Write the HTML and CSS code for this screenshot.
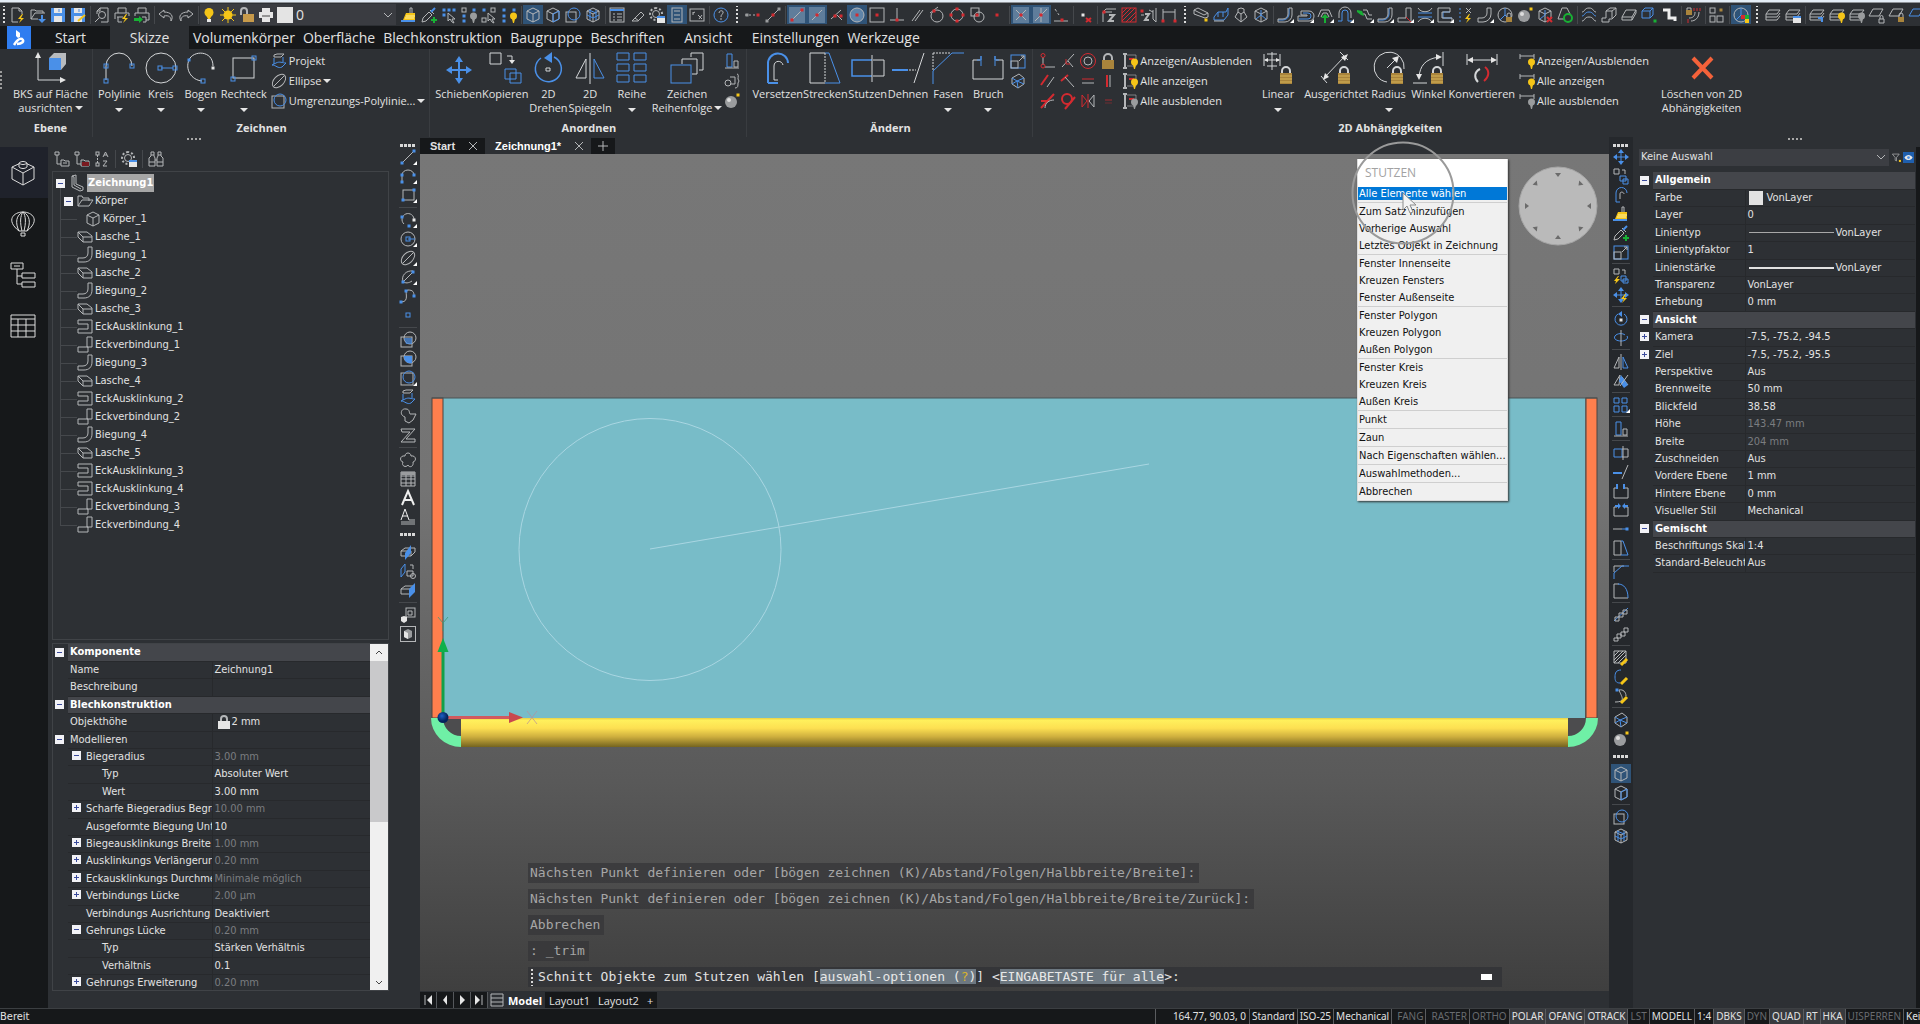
FILE: index.html
```html
<!DOCTYPE html>
<html lang="de">
<head>
    <meta charset="UTF-8">
    <meta name="viewport" content="width=device-width, initial-scale=1.0">
    <title>Zeichnung1</title>
    <link rel="stylesheet" href="styles.css">
</head>
<body>
    <div class="window-edge"></div>

    <!-- Quick access toolbar -->
    <header class="quickbar">
        <div class="tools" data-icons=": new open save saveas | preview print printgo | undo redo |"></div>
        <div class="layer-combo">
            <i data-icon="bulb"></i><i data-icon="sun"></i><i data-icon="unlock"></i><i data-icon="printer"></i>
            <span class="swatch"></span>
            <select aria-label="Layer"><option>0</option></select>
            <i data-icon="chevron"></i>
        </div>
        <div class="tools" data-icons="brush picker selcur selbulb selwin sellamp | *cube cubeblue sphere cubemesh | list clip gearwin *panel kxs | help : snapdots snapline | *snapend *snapmid snapnear *snapcen snapbox snapperp snappar snaptan snapquad snapins snapnode | *snapint *snapext snapapp | snapoff | dimz hatch negz dimh : lasche sheet loft cubetri | bend. lip. liparrow. hem. jog. bend. corner. relief. notch. bolts bendx. lockpie sphereshade cubex recycle | flatten box3d plate cubedot unfold | lockbend | grid4 | *pie : layers layerswin | layersarrow layersbulb layersgrey layer1 layerlock layer2"></div>
    </header>

    <!-- Ribbon tabs -->
    <nav class="tabs">
        <button class="logo" aria-label="Menü"><i data-icon="logo"></i></button>
        <button class="tab">Start</button>
        <button class="tab active">Skizze</button>
        <button class="tab">Volumenkörper</button>
        <button class="tab">Oberfläche</button>
        <button class="tab">Blechkonstruktion</button>
        <button class="tab">Baugruppe</button>
        <button class="tab">Beschriften</button>
        <button class="tab">Ansicht</button>
        <button class="tab">Einstellungen</button>
        <button class="tab">Werkzeuge</button>
    </nav>

    <section class="ribbon">
        <div class="ribbon-grip"></div>
        <div class="group">
            <div class="group-body">
                <button class="big"><i data-icon="Lucs"></i><span>BKS auf Fläche<br>ausrichten<b class="arr"></b></span></button>
            </div>
            <h2>Ebene</h2>
        </div>
        <div class="group">
            <div class="group-body">
                <button class="big"><i data-icon="Lpoly"></i><span>Polylinie</span><b class="arr"></b></button>
                <button class="big"><i data-icon="Lcircle"></i><span>Kreis</span><b class="arr"></b></button>
                <button class="big"><i data-icon="Larc"></i><span>Bogen</span><b class="arr"></b></button>
                <button class="big"><i data-icon="Lrect"></i><span>Rechteck</span><b class="arr"></b></button>
                <div class="stack">
                    <button><i data-icon="project"></i>Projekt</button>
                    <button><i data-icon="ellipse"></i>Ellipse<b class="arr"></b></button>
                    <button><i data-icon="boundary"></i>Umgrenzungs-Polylinie...<b class="arr"></b></button>
                </div>
            </div>
            <h2>Zeichnen</h2>
        </div>
        <div class="group">
            <div class="group-body">
                <button class="big"><i data-icon="Lmove"></i><span>Schieben</span></button>
                <button class="big"><i data-icon="Lcopy"></i><span>Kopieren</span></button>
                <button class="big"><i data-icon="Lrotate"></i><span>2D<br>Drehen</span></button>
                <button class="big"><i data-icon="Lmirror"></i><span>2D<br>Spiegeln</span></button>
                <button class="big"><i data-icon="Larray"></i><span>Reihe</span><b class="arr"></b></button>
                <button class="big"><i data-icon="Lorder"></i><span>Zeichen<br>Reihenfolge<b class="arr"></b></span></button>
                <div class="icon-grid one" data-icons="align hull sphereshade"></div>
            </div>
            <h2>Anordnen</h2>
        </div>
        <div class="group">
            <div class="group-body">
                <button class="big"><i data-icon="Loffset"></i><span>Versetzen</span></button>
                <button class="big"><i data-icon="Lstretch"></i><span>Strecken</span></button>
                <button class="big"><i data-icon="Ltrim"></i><span>Stutzen</span></button>
                <button class="big"><i data-icon="Lextend"></i><span>Dehnen</span></button>
                <button class="big"><i data-icon="Lchamfer"></i><span>Fasen</span><b class="arr"></b></button>
                <button class="big"><i data-icon="Lbreak"></i><span>Bruch</span><b class="arr"></b></button>
                <div class="icon-grid one" data-icons="scale wirecube"></div>
            </div>
            <h2>Ändern</h2>
        </div>
        <div class="group last">
            <div class="group-body">
                <div class="icon-grid four" data-icons="ccoin cperp cconc clock cpar cangle cequal cvert ctan ctanc csym chor"></div>
                <div class="stack">
                    <button><i data-icon="geobulb"></i>Anzeigen/Ausblenden</button>
                    <button><i data-icon="geobulb"></i>Alle anzeigen</button>
                    <button><i data-icon="geogrey"></i>Alle ausblenden</button>
                </div>
                <button class="big wide"><i data-icon="Llinear"></i><span>Linear</span><b class="arr"></b></button>
                <button class="big"><i data-icon="Laligned"></i><span>Ausgerichtet</span></button>
                <button class="big"><i data-icon="Lradius"></i><span>Radius</span><b class="arr"></b></button>
                <button class="big"><i data-icon="Langle"></i><span>Winkel</span></button>
                <button class="big"><i data-icon="Lconvert"></i><span>Konvertieren</span></button>
                <div class="stack">
                    <button><i data-icon="dimbulb"></i>Anzeigen/Ausblenden</button>
                    <button><i data-icon="dimbulb"></i>Alle anzeigen</button>
                    <button><i data-icon="dimgrey"></i>Alle ausblenden</button>
                </div>
                <button class="big delete"><i data-icon="Ldelete"></i><span>Löschen von 2D<br>Abhängigkeiten</span></button>
            </div>
            <h2>2D Abhängigkeiten</h2>
        </div>
    </section>

    <main class="main">
        <nav class="sidebar">
            <button class="active" aria-label="Struktur"><i data-icon="Sbrick"></i></button>
            <button aria-label="Ballon"><i data-icon="Sballoon"></i></button>
            <button aria-label="Baum"><i data-icon="Stree"></i></button>
            <button aria-label="Tabelle"><i data-icon="Stable"></i></button>
        </nav>

        <section class="explorer">
            <div class="grip"></div>
            <div class="tree-tools tools" data-icons="treea treeb sortaz | gearwin | binoc"></div>
            <ul class="tree">
                <li class="root"><button class="exp" aria-label="Zuklappen"></button><i data-icon="part"></i><span>Zeichnung1</span></li>
                <li class="folder"><button class="exp" aria-label="Zuklappen"></button><i data-icon="folder"></i><span>Körper</span></li>
                <li class="sub"><i data-icon="cube"></i><span>Körper_1</span></li>
                <li><i data-icon="flange"></i><span>Lasche_1</span></li>
                <li><i data-icon="bendg"></i><span>Biegung_1</span></li>
                <li><i data-icon="flange"></i><span>Lasche_2</span></li>
                <li><i data-icon="bendg"></i><span>Biegung_2</span></li>
                <li><i data-icon="flange"></i><span>Lasche_3</span></li>
                <li><i data-icon="relg"></i><span>EckAusklinkung_1</span></li>
                <li><i data-icon="jung"></i><span>Eckverbindung_1</span></li>
                <li><i data-icon="bendg"></i><span>Biegung_3</span></li>
                <li><i data-icon="flange"></i><span>Lasche_4</span></li>
                <li><i data-icon="relg"></i><span>EckAusklinkung_2</span></li>
                <li><i data-icon="jung"></i><span>Eckverbindung_2</span></li>
                <li><i data-icon="bendg"></i><span>Biegung_4</span></li>
                <li><i data-icon="flange"></i><span>Lasche_5</span></li>
                <li><i data-icon="relg"></i><span>EckAusklinkung_3</span></li>
                <li><i data-icon="relg"></i><span>EckAusklinkung_4</span></li>
                <li><i data-icon="jung"></i><span>Eckverbindung_3</span></li>
                <li class="end"><i data-icon="jung"></i><span>Eckverbindung_4</span></li>
            </ul>
            <div class="prop-box">
                <table class="props">
                    <colgroup><col class="gutter"><col class="name"><col></colgroup>
                    <tr class="head"><td><button class="exp" aria-label="Zuklappen"></button></td><th colspan="2">Komponente</th></tr>
                    <tr><td></td><th>Name</th><td>Zeichnung1</td></tr>
                    <tr><td></td><th>Beschreibung</th><td></td></tr>
                    <tr class="head"><td><button class="exp" aria-label="Zuklappen"></button></td><th colspan="2">Blechkonstruktion</th></tr>
                    <tr><td></td><th>Objekthöhe</th><td><i data-icon="padlock"></i>2 mm</td></tr>
                    <tr><td><button class="exp" aria-label="Zuklappen"></button></td><th>Modellieren</th><td></td></tr>
                    <tr><td></td><th class="l1"><button class="exp" aria-label="Zuklappen"></button>Biegeradius</th><td class="dim">3.00 mm</td></tr>
                    <tr><td></td><th class="l2">Typ</th><td>Absoluter Wert</td></tr>
                    <tr><td></td><th class="l2">Wert</th><td>3.00 mm</td></tr>
                    <tr><td></td><th class="l1"><button class="exp plus" aria-label="Aufklappen"></button>Scharfe Biegeradius Begre</th><td class="dim">10.00 mm</td></tr>
                    <tr><td></td><th class="l1 leaf">Ausgeformte Biegung Unte</th><td>10</td></tr>
                    <tr><td></td><th class="l1"><button class="exp plus" aria-label="Aufklappen"></button>Biegeausklinkungs Breite</th><td class="dim">1.00 mm</td></tr>
                    <tr><td></td><th class="l1"><button class="exp plus" aria-label="Aufklappen"></button>Ausklinkungs Verlängerung</th><td class="dim">0.20 mm</td></tr>
                    <tr><td></td><th class="l1"><button class="exp plus" aria-label="Aufklappen"></button>Eckausklinkungs Durchmes</th><td class="dim">Minimale möglich</td></tr>
                    <tr><td></td><th class="l1"><button class="exp plus" aria-label="Aufklappen"></button>Verbindungs Lücke</th><td class="dim">2.00 µm</td></tr>
                    <tr><td></td><th class="l1 leaf">Verbindungs Ausrichtung</th><td>Deaktiviert</td></tr>
                    <tr><td></td><th class="l1"><button class="exp" aria-label="Zuklappen"></button>Gehrungs Lücke</th><td class="dim">0.20 mm</td></tr>
                    <tr><td></td><th class="l2">Typ</th><td>Stärken Verhältnis</td></tr>
                    <tr><td></td><th class="l2">Verhältnis</th><td>0.1</td></tr>
                    <tr><td></td><th class="l1"><button class="exp plus" aria-label="Aufklappen"></button>Gehrungs Erweiterung</th><td class="dim">0.20 mm</td></tr>
                </table>
                <div class="scrollbar">
                    <button aria-label="Nach oben"><i data-icon="up"></i></button>
                    <div class="thumb"></div>
                    <button aria-label="Nach unten"><i data-icon="down"></i></button>
                </div>
            </div>
        </section>

        <div class="strip left" data-icons=": line. pline. rect. | arc. circle. ellipse. ellarc. spline point | reghatch regfill boundary. project wipe zz | cloud table texta textb : secplane secmove secside | viewbox cubeshade"></div>

        <section class="work">
            <div class="doc-tabs">
                <button class="doc">Start<i data-icon="close"></i></button>
                <button class="doc active">Zeichnung1*<i data-icon="close"></i></button>
                <button class="doc add" aria-label="Neu"><i data-icon="add"></i></button>
            </div>

            <div class="canvas">
                <svg class="scene" viewBox="0 0 1189 837" preserveAspectRatio="none">
                    <defs>
                        <linearGradient id="roll" x1="0" y1="0" x2="0" y2="1">
                            <stop offset="0" stop-color="#e8d048"/>
                            <stop offset=".08" stop-color="#fff05c"/>
                            <stop offset=".35" stop-color="#fde052"/>
                            <stop offset=".65" stop-color="#cdae3e"/>
                            <stop offset="1" stop-color="#75641f"/>
                        </linearGradient>
                        <radialGradient id="origin" cx=".4" cy=".35">
                            <stop offset="0" stop-color="#1d5fc4"/>
                            <stop offset="1" stop-color="#04245c"/>
                        </radialGradient>
                    </defs>
                    <rect x="23" y="244" width="1142" height="320" fill="#78bcc8"/>
                    <rect x="12" y="244" width="11" height="320" fill="#ff7f4d" stroke="#4d4540"/>
                    <rect x="1166" y="244" width="11" height="320" fill="#ff7f4d" stroke="#4d4540"/>
                    <path d="M12 244H1177" stroke="#4a5557" fill="none"/>
                    <path d="M23 564h18v19A19 19 0 0 1 23 564zM1166 564h-18v19A19 19 0 0 0 1166 564z" fill="#4c4c4e"/>
                    <path d="M11 564H23a18 18 0 0 0 18 18v11A30 29 0 0 1 11 564z" fill="#6ff0a6"/>
                    <path d="M1178 564H1166a18 18 0 0 1-18 18v11A30 29 0 0 0 1178 564z" fill="#6ff0a6"/>
                    <rect x="41" y="564" width="1107" height="29" fill="url(#roll)"/>
                    <circle cx="230" cy="395.5" r="131" fill="none" stroke="#a9d6e2"/>
                    <path d="M230 395L729 310" stroke="#a9d6e2" fill="none"/>
                    <path d="M23 562V496" stroke="#12a04a" stroke-width="3"/>
                    <path d="M17.5 498L23 484l5.5 14z" fill="#0fb04c"/>
                    <path d="M28 563.5H90" stroke="#d25a5e" stroke-width="3"/>
                    <path d="M89 558L103 563.5l-14 5.5z" fill="#c9484e"/>
                    <path d="M107 557l10 13M117 557l-10 13" stroke="#b78f9b" fill="none" opacity=".7"/>
                    <path d="M18 463l5 6l5-6M23 469v8" stroke="#3f9a77" fill="none" opacity=".8"/>
                    <circle cx="23" cy="563.5" r="5.5" fill="url(#origin)"/>
                </svg>

                <svg class="look" viewBox="-40 -40 80 80">
                    <circle r="39" fill="#bababa" stroke="#a6a6a6"/>
                    <g fill="#6b6b6b">
                        <path id="tick" d="M-3-33h6L0-29z"/>
                        <use href="#tick" transform="rotate(45)"/><use href="#tick" transform="rotate(90)"/>
                        <use href="#tick" transform="rotate(135)"/><use href="#tick" transform="rotate(180)"/>
                        <use href="#tick" transform="rotate(225)"/><use href="#tick" transform="rotate(270)"/>
                        <use href="#tick" transform="rotate(315)"/>
                    </g>
                </svg>

                <div class="menu">
                    <div class="menu-title">STUTZEN</div>
                    <button class="selected">Alle Elemente wählen</button>
                    <hr>
                    <button>Zum Satz hinzufügen</button>
                    <button>Vorherige Auswahl</button>
                    <button>Letztes Objekt in Zeichnung</button>
                    <hr>
                    <button>Fenster Innenseite</button>
                    <button>Kreuzen Fensters</button>
                    <button>Fenster Außenseite</button>
                    <hr>
                    <button>Fenster Polygon</button>
                    <button>Kreuzen Polygon</button>
                    <button>Außen Polygon</button>
                    <hr>
                    <button>Fenster Kreis</button>
                    <button>Kreuzen Kreis</button>
                    <button>Außen Kreis</button>
                    <hr>
                    <button>Punkt</button>
                    <hr>
                    <button>Zaun</button>
                    <hr>
                    <button>Nach Eigenschaften wählen...</button>
                    <hr>
                    <button>Auswahlmethoden...</button>
                    <hr>
                    <button>Abbrechen</button>
                </div>

                <svg class="pointer" viewBox="0 0 104 104">
                    <circle cx="52" cy="52" r="50.5" fill="none" stroke="#9a9a9a" stroke-width="2"/>
                    <path d="M52 52v17l4-4l3 7l3-1l-3-7h6z" fill="#f4f4f4" stroke="#8c8c8c"/>
                </svg>

                <div class="console">
                    <p>Nächsten Punkt definieren oder [bögen zeichnen (K)/Abstand/Folgen/Halbbreite/Breite]:</p>
                    <p>Nächsten Punkt definieren oder [bögen zeichnen (K)/Abstand/Folgen/Halbbreite/Breite/Zurück]:</p>
                    <p>Abbrechen</p>
                    <p>: _trim</p>
                    <div class="prompt">
                        <span class="prompt-grip"></span>
                        <span>Schnitt Objekte zum Stutzen wählen [<mark>auswahl-optionen (<em>?</em>)</mark>] &lt;<mark>EINGABETASTE für alle</mark>&gt;:</span>
                        <button aria-label="Minimieren"></button>
                    </div>
                </div>
            </div>

            <div class="layouts">
                <button class="nav" aria-label="Erstes"><i data-icon="first"></i></button>
                <button class="nav" aria-label="Zurück"><i data-icon="prev"></i></button>
                <button class="nav" aria-label="Weiter"><i data-icon="next"></i></button>
                <button class="nav" aria-label="Letztes"><i data-icon="lastp"></i></button>
                <button class="nav plain" aria-label="Liste"><i data-icon="rows"></i></button>
                <button class="layout active">Model</button>
                <button class="layout">Layout1</button>
                <button class="layout">Layout2</button>
                <button class="layout">+</button>
            </div>
        </section>

        <div class="strip right" data-icons=": move copy offset brush picker scale | copybolt movebolt | rotate rot3d | mirror mirror3d | array. | align | trim extend break join lengthen stretch | chamfer fillet | chainb chain | hatchedit pledit spedit | wirecube sphereshade : *cube cubeblue | sphere cubemesh"></div>

        <section class="inspector">
            <div class="grip"></div>
            <div class="picker">
                <div class="select-wrap">
                    <select aria-label="Auswahl"><option>Keine Auswahl</option></select>
                    <i data-icon="chevron"></i>
                </div>
                <button aria-label="Filter"><i data-icon="filter"></i></button>
                <button class="on" aria-label="Ansicht"><i data-icon="eye"></i></button>
            </div>
            <table class="props">
                <colgroup><col class="gutter"><col class="name"><col></colgroup>
                <tr class="head"><td><button class="exp" aria-label="Zuklappen"></button></td><th colspan="2">Allgemein</th></tr>
                <tr><td></td><th>Farbe</th><td><span class="chip"></span>VonLayer</td></tr>
                <tr><td></td><th>Layer</th><td>0</td></tr>
                <tr><td></td><th>Linientyp</th><td><span class="rule"></span>VonLayer</td></tr>
                <tr><td></td><th>Linientypfaktor</th><td>1</td></tr>
                <tr><td></td><th>Linienstärke</th><td><span class="rule thick"></span>VonLayer</td></tr>
                <tr><td></td><th>Transparenz</th><td>VonLayer</td></tr>
                <tr><td></td><th>Erhebung</th><td>0 mm</td></tr>
                <tr class="head"><td><button class="exp" aria-label="Zuklappen"></button></td><th colspan="2">Ansicht</th></tr>
                <tr><td><button class="exp plus" aria-label="Aufklappen"></button></td><th>Kamera</th><td>-7.5, -75.2, -94.5</td></tr>
                <tr><td><button class="exp plus" aria-label="Aufklappen"></button></td><th>Ziel</th><td>-7.5, -75.2, -95.5</td></tr>
                <tr><td></td><th>Perspektive</th><td>Aus</td></tr>
                <tr><td></td><th>Brennweite</th><td>50 mm</td></tr>
                <tr><td></td><th>Blickfeld</th><td>38.58</td></tr>
                <tr><td></td><th>Höhe</th><td class="dim">143.47 mm</td></tr>
                <tr><td></td><th>Breite</th><td class="dim">204 mm</td></tr>
                <tr><td></td><th>Zuschneiden</th><td>Aus</td></tr>
                <tr><td></td><th>Vordere Ebene</th><td>1 mm</td></tr>
                <tr><td></td><th>Hintere Ebene</th><td>0 mm</td></tr>
                <tr><td></td><th>Visueller Stil</th><td>Mechanical</td></tr>
                <tr class="head"><td><button class="exp" aria-label="Zuklappen"></button></td><th colspan="2">Gemischt</th></tr>
                <tr><td></td><th>Beschriftungs Skali</th><td>1:4</td></tr>
                <tr><td></td><th>Standard-Beleucht</th><td>Aus</td></tr>
            </table>
        </section>
        <div class="edge"></div>
    </main>

    <footer class="status">
        <span class="ready">Bereit</span>
        <div class="fields">
            <span class="coords">164.77, 90.03, 0</span>
            <button>Standard</button>
            <button>ISO-25</button>
            <button>Mechanical</button>
            <button class="off wide">FANG</button>
            <button class="off wide">RASTER</button>
            <button class="off">ORTHO</button>
            <button class="on">POLAR</button>
            <button class="on">OFANG</button>
            <button class="on">OTRACK</button>
            <button class="off">LST</button>
            <button>MODELL</button>
            <button>1:4</button>
            <button class="on">DBKS</button>
            <button class="off">DYN</button>
            <button class="on">QUAD</button>
            <button class="on">RT</button>
            <button class="on">HKA</button>
            <button class="off">UISPERREN</button>
            <button class="cut">Kein</button>
        </div>
    </footer>

    <script src="icons.js"></script>
</body>
</html>
```

FILE: styles.css
```css
:root {
    --panel: #2d3034;
    --dark: #16181a;
    --head: #44464b;
    --text: #e2e2e2;
    --muted: #7b7d80;
    --blue: #4a90e8;
    --line: #404347;
    --ui: "DejaVu Sans Condensed", "DejaVu Sans", sans-serif;
    --ribbon: "Open Sans", "Noto Sans", sans-serif;
}

* {
    box-sizing: border-box;
}

body {
    margin: 0;
    height: 100vh;
    display: flex;
    flex-direction: column;
    overflow: hidden;
    background: var(--panel);
    color: var(--text);
    font: 11px/14px var(--ui);
}

button, select {
    margin: 0;
    padding: 0;
    border: 0;
    background: none;
    color: inherit;
    font: inherit;
    white-space: nowrap;
}

select {
    appearance: none;
}

i {
    display: inline-flex;
    flex: none;
}

/* Icon strokes */
.ico {
    display: block;
    width: 16px;
    height: 16px;
    fill: none;
    stroke: #b4b6b8;
    overflow: visible;
}

.ico.large {
    width: 32px;
    height: 32px;
    stroke: #d4d6d8;
}

.ico.side {
    width: 26px;
    height: 26px;
    stroke: #dcdcdc;
}

.ico .b { stroke: var(--blue); }
.ico .r { stroke: #d42a30; }
.ico .fb { fill: var(--blue); stroke: none; }
.ico .fr { fill: #d42a30; stroke: none; }
.ico .fy { fill: #f5c518; stroke: none; }
.ico .fo { fill: #a9843c; stroke: none; }
.ico .fg { fill: #18b034; stroke: none; }
.ico .fw { fill: #e6e6e6; stroke: none; }
.ico .fs { fill: #9a9c9e; stroke: none; }
.ico .x2 { stroke-width: 2; }

.window-edge {
    height: 3px;
    flex: none;
    background: #e4edf6;
    border-bottom: 1px solid #8e9297;
}

/* Quick bar */
.quickbar {
    display: flex;
    align-items: center;
    height: 23px;
    flex: none;
    overflow: hidden;
}

.tools {
    display: flex;
    align-items: center;
    flex: none;
}

.tool {
    position: relative;
    display: flex;
    align-items: center;
    justify-content: center;
    width: 20px;
    height: 19px;
    flex: none;
}

.tool.active {
    background: #2f5377;
}

.tool.flyout::after {
    content: "";
    position: absolute;
    right: 1px;
    bottom: 1px;
    border: 2px solid transparent;
    border-right-color: #fff;
    border-bottom-color: #fff;
}

.sep {
    width: 1px;
    height: 18px;
    margin: 0 1px 0 2px;
    background: #45484c;
    flex: none;
}

.dots {
    width: 12px;
    height: 18px;
    flex: none;
    background: linear-gradient(#dcdcdc 2px, transparent 2px) center / 2px 4px repeat-y;
}

.quickbar .tools:first-child .dots {
    width: 8px;
}

.layer-combo {
    display: flex;
    align-items: center;
    gap: 3px;
    width: 196px;
    height: 21px;
    margin-right: 3px;
    padding-left: 1px;
    background: #3a3c41;
    flex: none;
}

.layer-combo .swatch {
    width: 16px;
    height: 16px;
    background: #e4e4e4;
}

.layer-combo select {
    flex: 1;
    min-width: 0;
    font: 14px/18px var(--ribbon);
}

/* Tabs */
.tabs {
    display: flex;
    height: 23px;
    flex: none;
    padding-left: 7px;
    background: var(--dark);
    font: 14px/22px var(--ribbon);
}

.logo {
    display: flex;
    align-items: center;
    justify-content: center;
    width: 24px;
    background: #2f7df0;
}

.tab {
    min-width: 79px;
    padding: 0 4px;
}

.tab.active {
    background: var(--panel);
}

/* Ribbon */
.ribbon {
    display: flex;
    height: 88px;
    flex: none;
    font: 11px/14px var(--ribbon);
}

.ribbon-grip {
    width: 8px;
    height: 20px;
    margin-top: 22px;
    background: linear-gradient(#9c9c9c 2px, transparent 2px) left / 2px 4px repeat-y;
}

.group {
    display: flex;
    flex-direction: column;
    justify-content: space-between;
    padding: 2px 4px 0 5px;
    border-right: 1px solid #393c40;
}

.group.last {
    border: 0;
}

.group-body {
    display: flex;
    align-items: flex-start;
}

.group h2 {
    margin: 0;
    padding-bottom: 2px;
    font: bold 11px/14px var(--ribbon);
    text-align: center;
}

.big {
    display: flex;
    flex-direction: column;
    align-items: center;
    gap: 3px;
    min-width: 40px;
}

.big.wide {
    padding: 0 10px;
}

.big.delete {
    padding-left: 12px;
}

.big .ico {
    margin-top: 1px;
}

.big > .arr {
    margin: 4px 0 0;
}

.arr {
    display: inline-block;
    margin: 0 0 2px 2px;
    border: 4px solid transparent;
    border-top: 4px solid #e6e6e6;
    border-bottom: 0;
}

.stack {
    display: flex;
    flex-direction: column;
    padding-left: 4px;
}

.stack button {
    display: flex;
    align-items: center;
    gap: 2px;
    height: 20px;
}

.stack .arr {
    margin: 0;
}

.icon-grid {
    display: grid;
    grid-auto-rows: 20px;
}

.icon-grid.one {
    grid-template-columns: 20px;
}

.icon-grid.four {
    grid-template-columns: repeat(4, 20px);
}

/* Main area */
.main {
    display: flex;
    flex: 1;
    min-height: 0;
}

.grip {
    width: 16px;
    height: 10px;
    flex: none;
    align-self: center;
    background: linear-gradient(90deg, #a8a8a8 2px, transparent 2px) 0 1px / 4px 2px repeat-x;
}

.explorer .grip {
    margin-right: 52px;
}

.inspector .grip {
    margin-left: 38px;
}

.sidebar {
    display: flex;
    flex-direction: column;
    width: 48px;
    flex: none;
    margin-top: 10px;
    background: var(--dark);
}

.sidebar button {
    display: flex;
    align-items: center;
    justify-content: center;
    height: 51px;
    padding-right: 2px;
}

.sidebar .active {
    background: #1f222b;
}

.explorer {
    display: flex;
    flex-direction: column;
    width: 346px;
    flex: none;
    padding: 0 5px 17px 4px;
}

.tree-tools {
    height: 24px;
}

.tree-tools .sep {
    margin: 0 3px;
}

.tree {
    flex: 1;
    margin: 0 0 3px;
    padding: 2px 0 0;
    border: 1px solid var(--line);
    list-style: none;
}

.tree li {
    position: relative;
    display: flex;
    align-items: center;
    gap: 2px;
    height: 18px;
    padding-left: 24px;
}

/* Branch lines */
.tree li::before {
    content: "";
    position: absolute;
    left: 7px;
    top: 0;
    width: 16px;
    height: 9px;
    border-left: 1px solid #45484c;
    border-bottom: 1px solid #45484c;
}

.tree li::after {
    content: "";
    position: absolute;
    left: 7px;
    top: 9px;
    height: 9px;
    border-left: 1px solid #45484c;
}

.tree li.end::after, .tree li.root::before {
    display: none;
}

.tree li.root {
    padding-left: 3px;
}

.tree li.root i {
    margin-left: 2px;
}

.tree li.root span {
    padding: 2px 1px;
    background: #a6a6a6;
    color: #fff;
    font-weight: bold;
}

.tree li.folder {
    padding-left: 11px;
}

.tree li.folder::before {
    height: 18px;
    border-bottom: 0;
}

.tree li.folder .exp {
    margin-right: 2px;
}

.tree li.sub {
    padding-left: 32px;
}

.exp {
    position: relative;
    z-index: 1;
    display: inline-block;
    width: 9px;
    height: 9px;
    flex: none;
    background: linear-gradient(#3a4a9c, #3a4a9c) center / 5px 1px no-repeat #f2f2f6;
}

.exp.plus {
    background: linear-gradient(#3a4a9c, #3a4a9c) center / 5px 1px no-repeat, linear-gradient(#3a4a9c, #3a4a9c) center / 1px 5px no-repeat #f2f2f6;
}

/* Property tables */
.prop-box {
    display: flex;
    align-items: flex-start;
    height: 348px;
    flex: none;
    overflow: hidden;
    border: 1px solid var(--line);
}

.props {
    width: 100%;
    table-layout: fixed;
    border-collapse: collapse;
}

.props .gutter { width: 15px; }
.props .name { width: 144px; }

.props tr { height: 17px; }
.props tr:nth-child(5n + 3), .props tr:nth-child(5n) { height: 18px; }

.props td, .props th {
    padding: 0 0 0 2px;
    border-bottom: 1px solid #27292c;
    font-weight: normal;
    line-height: 14px;
    text-align: left;
    white-space: nowrap;
    overflow: hidden;
}

.props th + td {
    border-left: 1px solid #27292c;
}

.props td:first-child {
    padding: 0 0 0 2px;
    border: 0;
    line-height: 9px;
}

.props .head th {
    background: var(--head);
    color: #fff;
    font-weight: bold;
}

.props .l1 { padding-left: 4px; }
.props .l1 .exp { margin-right: 5px; }
.props .leaf { padding-left: 18px; }
.props .l2 { padding-left: 34px; }
.props .dim { color: var(--muted); }

.props td i {
    margin: -3px 0 -3px 1px;
    vertical-align: middle;
}

.scrollbar {
    display: flex;
    flex-direction: column;
    align-self: stretch;
    width: 18px;
    flex: none;
    background: #f0f0f0;
}

.scrollbar button {
    height: 17px;
    display: flex;
    justify-content: center;
    align-items: center;
}

.scrollbar .thumb {
    height: 161px;
    margin-bottom: auto;
    background: #c9c9cb;
}

/* Vertical tool strips */
.strip {
    display: flex;
    flex-direction: column;
    align-items: center;
    width: 26px;
    flex: none;
    padding-left: 2px;
}

.strip .sep {
    width: 18px;
    height: 1px;
    margin: 3px 0 2px;
}

.strip .dots {
    width: 16px;
    height: 16px;
    background: linear-gradient(90deg, #d8d8d8 3px, transparent 3px) left center / 4px 3px repeat-x;
}

.strip .dots:first-child {
    height: 10px;
    background-position: left bottom;
}

.strip.right {
    width: 24px;
    padding-left: 0;
    background: #25282c;
}

.strip.right .sep {
    margin: 2px 0;
}

/* Drawing window */
.work {
    display: flex;
    flex-direction: column;
    flex: 1;
    min-width: 0;
}

.doc-tabs {
    display: flex;
    height: 17px;
    flex: none;
    padding-top: 1px;
    font: bold 11px/14px "Liberation Sans", Arial, sans-serif;
}

.doc {
    display: flex;
    align-items: center;
    gap: 10px;
    padding: 0 4px 0 10px;
    background: var(--dark);
}

.doc.active {
    background: var(--panel);
    color: #fff;
}

.doc.add {
    padding: 0 4px;
}

.canvas {
    position: relative;
    flex: 1;
    min-height: 0;
    background: linear-gradient(#777 0, #747474 40%, #595959 75%, #3f3f3f 100%);
}

.scene {
    display: block;
    width: 100%;
    height: 100%;
}

.look {
    position: absolute;
    top: 12px;
    right: 11px;
    width: 80px;
    height: 80px;
}

.pointer {
    position: absolute;
    top: -13px;
    right: 154px;
    width: 104px;
    height: 104px;
    pointer-events: none;
}

.menu {
    position: absolute;
    top: 5px;
    right: 101px;
    width: 151px;
    display: flex;
    flex-direction: column;
    background: #f0f0f0;
    color: #111;
    border: 1px solid #dcdcdc;
    border-top: 0;
    box-shadow: 1px 1px 2px #333;
}

.menu-title {
    padding: 0 7px;
    background: #fff;
    color: #a2a2a2;
    font: 12px/28px var(--ribbon);
}

.menu button {
    height: 17px;
    padding-left: 1px;
    text-align: left;
}

.menu .selected {
    height: 13px;
    margin-bottom: 2px;
    background: #0078d7;
    color: #fff;
    line-height: 13px;
}

.menu hr {
    width: 100%;
    height: 1px;
    margin: 0;
    border: 0;
    background: #cfcfcf;
}

.console {
    position: absolute;
    left: 108px;
    right: 107px;
    bottom: 4px;
    display: flex;
    flex-direction: column;
    align-items: flex-start;
    gap: 6px;
    font: 13px/20px "DejaVu Sans Mono", monospace;
}

.console p {
    margin: 0;
    padding: 0 4px 0 2px;
    background: rgba(52, 53, 55, .7);
    color: #a6a6a6;
}

.prompt {
    display: flex;
    align-items: center;
    width: 100%;
    background: #343538;
    padding: 0 10px 0 3px;
}

.prompt-grip {
    width: 3px;
    height: 17px;
    margin-right: 4px;
    background: linear-gradient(#d8d8d8 2px, transparent 2px) left top / 2px 4px repeat-y;
}

.prompt mark {
    background: #6d7881;
    color: #e8e8e8;
}

.prompt em {
    color: #d8b22e;
    font-style: normal;
}

.prompt button {
    width: 11px;
    height: 6px;
    margin-left: auto;
    background: #fff;
}

.layouts {
    display: flex;
    height: 17px;
    flex: none;
    padding-top: 1px;
    font: 11px/15px var(--ribbon);
    background: var(--panel);
}

.layouts .nav {
    display: flex;
    align-items: center;
    justify-content: center;
    width: 17px;
    background: var(--dark);
    border-right: 1px solid #55585c;
}

.layouts .nav.plain {
    background: none;
    border: 0;
}

.layout {
    padding: 0 4px;
    background: var(--dark);
}

.layout.active {
    padding: 0 3px;
    background: var(--panel);
    color: #fff;
    font-weight: bold;
}

/* Right panel */
.inspector {
    display: flex;
    flex-direction: column;
    flex: none;
    width: 283px;
    padding: 0 1px 0 5px;
}

.picker {
    display: flex;
    align-items: center;
    height: 20px;
    margin-bottom: 5px;
    padding-left: 1px;
}

.picker button {
    display: flex;
    align-items: center;
    justify-content: center;
    width: 11px;
    height: 11px;
    margin-left: 1px;
}

.picker button .ico {
    width: 11px;
    height: 11px;
}

.picker button.on {
    background: #1f5fae;
}

.select-wrap {
    display: flex;
    align-items: center;
    width: 250px;
    height: 17px;
    margin-right: 1px;
    background: #3c3e43;
}

.select-wrap select {
    flex: 1;
    padding-left: 2px;
}

.inspector .props .name { width: 92px; }

.chip {
    display: inline-block;
    width: 14px;
    height: 14px;
    margin: -2px 4px -2px 1px;
    background: #e2e2e2;
    vertical-align: middle;
}

.rule {
    display: inline-block;
    width: 85px;
    height: 1px;
    margin: 0 2px 0 1px;
    background: #a8a8a8;
    vertical-align: middle;
}

.rule.thick {
    height: 2px;
    background: #e2e2e2;
}

.edge {
    width: 4px;
    flex: none;
    margin-top: 10px;
    background: var(--dark);
}

/* Status bar */
.status {
    display: flex;
    justify-content: space-between;
    height: 16px;
    flex: none;
    background: var(--dark);
    border-top: 1px solid #3c3f42;
    line-height: 15px;
}

.fields {
    display: flex;
    font: 10px/15px "Noto Sans", "Open Sans", sans-serif;
}

.fields .coords {
    padding: 0 3px 0 17px;
    border-left: 1px solid #5a5c5f;
}

.fields button {
    padding: 0 2px;
    border-left: 1px solid #5a5c5f;
}

.fields .off { color: #686b6f; }
.fields .wide { padding-left: 5px; }
.fields .on { background: #383a3e; }

.fields .cut {
    width: 17px;
    overflow: hidden;
}
```

FILE: icons.js
```javascript
// small icons are drawn on a 16 grid, "L" ribbon icons on 32, "S" sidebar icons on 26
const cubePath = '<path d="M8 1l6 3v8l-6 3l-6-3V4zM2 4l6 3l6-3M8 7v8"/>';
const bolt = '<path class="fy" d="M12 7l-4 5h3l-2 4l5-5h-3l2-4z"/>';
const win = '<rect class="fw" x="8" y="9" width="8" height="7"/><path class="b x2" d="M8 10h8"/>';
const floppy = '<path class="fb" d="M1 1h14v14H1z"/><path class="fw" d="M4 1h8v5H4zM4 9h8v6H4z"/><path class="b" d="M9 2v3"/>';
const lamp = c => `<circle class="${c}" cx="12.5" cy="9" r="3.5"/><path class="${c}" d="M11 12h3l-1 4h-1z"/>`;
const stackPath = '<path d="M4 3h11l-3 4H1zM1 10h11l3-4M1 13h11l3-4M1 7v6"/>';
const sq = (x, y) => `<rect class="b" x="${x - 2}" y="${y - 2}" width="4" height="4"/>`;
const dot = (x, y, c = 'fb') => `<rect class="${c}" x="${x - 1.5}" y="${y - 1.5}" width="3" height="3"/>`;
const lock32 = '<path class="x2" d="M20 22v-3a4 4 0 0 1 8 0v3"/><rect class="fo" x="18" y="21" width="12" height="11"/><path d="M18 24h12M18 27h12M18 30h12" stroke="#d6b458"/>';
const lock16 = '<path d="M10 10V8a2 2 0 0 1 4 0v2"/><rect class="fo" x="9" y="10" width="6" height="5"/>';
const sheetBend = '<path class="b" d="M12 1v6a6 6 0 0 1-6 6H1"/><path d="M12 1h3v7a7 7 0 0 1-7 7H1v-3h5a5 5 0 0 0 5-5V1"/>';
const arrows16 = '<path class="b" d="M8 3v10M3 8h10"/><path class="fb" d="M8 0l3 4H5zM8 16l3-4H5zM0 8l4-3v6zM16 8l-4-3v6z"/>';
const pencil = '<path d="M8 15l6-6" stroke="#f5c518" stroke-width="3"/>';

const icons = {
    logo: '<path d="M5 0l4 3v4l-2 1l-2-2z" fill="#fff" stroke="none"/><path d="M3 15c3-5 5-7 8-6c3 2 0 5-5 5" stroke="#fff" stroke-width="2.5"/>',
    new: '<path d="M2 1h7l3 3v3M2 1v14h6M9 1v3h3"/>' + bolt,
    open: '<path d="M1 12V3h4l1 1h7v2M1 12l4-6h10M1 12h7"/><path class="b x2" d="M12 8v5"/><path class="fb" d="M8 12h8l-4 4z"/>',
    save: floppy,
    saveas: floppy + '<path d="M8 14l7-6" stroke="#f5c518" stroke-width="2"/>',
    preview: '<path d="M7 15h7V1H6L3 4v3M3 4h3V1"/><circle cx="8" cy="8" r="3.5"/><path d="M5 11l-4 4"/>',
    print: '<path d="M4 6V1h8v5M1 12V6h14v3M3 10h6M4 10v5h4"/>' + bolt,
    printgo: '<path d="M4 6V1h8v5M1 9V6h14v7h-3M8 10h4v5H9"/><path class="fg" d="M0 11h5V9l4 3.5L5 16v-2H0z"/>',
    undo: '<path d="M6 3L1 7l5 4V9c5-1 7 1 7 5c3-5 0-9-7-9z"/>',
    redo: '<path d="M10 3l5 4l-5 4V9c-5-1-7 1-7 5c-3-5 0-9 7-9z"/>',
    bulb: '<circle class="fy" cx="8" cy="5.5" r="4.5"/><path class="fy" d="M5 8h6l-2 4H7z"/><path class="fw" d="M6 12h4v3H6z"/>',
    sun: '<circle class="fy" cx="8" cy="8" r="4.5"/><path d="M8 0v16M0 8h16M2 2l12 12M14 2L2 14" stroke="#f5c518"/>',
    unlock: '<path class="x2" d="M2 8V4a3 3 0 0 1 6 0v3"/><rect x="4" y="7" width="11" height="8" fill="#c79a4a" stroke="none"/>',
    printer: '<path class="fw" d="M4 1h8v4H4zM1 5h14v6H1zM4 9h8v6H4z"/><path d="M4 9h8" stroke="#444"/>',
    chevron: '<path d="M4 6l4 4l4-4"/>',
    brush: '<path d="M9 6V1h2v5"/><path class="fy" d="M5 6h9v7H2z"/><path class="b x2" d="M0 14h14"/><path d="M5 9l9 0M4 11h9" stroke="#fff0a0"/>',
    picker: '<path d="M1 15l1-4l6-6l3 3l-6 6zM9 3l4 4"/><path class="b x2" d="M10 5l4-4"/><path class="x2" d="M13 10v6M10 13h6" stroke="#18b034"/>',
    selcur: dot(3, 3) + dot(8, 3) + dot(13, 3) + dot(3, 8) + '<path d="M7 6l7 6h-3l2 4l-2-1l-2-3l-2 2z"/>',
    selbulb: '<rect x="1" y="1" width="4" height="4"/>' + dot(13, 3) + dot(3, 9) + dot(3, 14) + lamp('fs'),
    selwin: dot(3, 3) + '<rect x="10" y="1" width="4" height="4"/><rect x="1" y="11" width="4" height="4"/><path d="M7 6l7 6h-3l2 4l-2-1l-2-3l-2 2z"/>',
    sellamp: dot(3, 3) + dot(13, 3) + dot(3, 9) + dot(3, 14) + lamp('fy'),
    cube: cubePath,
    cubeblue: cubePath + '<path class="b" d="M8 7l6-3v8l-6 3z"/>',
    sphere: '<rect x="1" y="5" width="10" height="10"/><circle class="b" cx="9" cy="7" r="6"/>',
    cubemesh: cubePath + '<path class="b" d="M5 3v10M11 3v10M2 8l6 3l6-3M4 3l7 3"/>',
    list: '<rect x="1" y="1" width="14" height="14"/><path class="b x2" d="M1 3h14"/><path d="M4 7h2M4 10h2M4 13h2M8 7h5M8 10h5M8 13h5"/>',
    clip: '<path d="M3 14L12 5l3 3l-6 6H4zM6 11l4 3"/>',
    gearwin: '<circle cx="7" cy="7" r="3.5"/><path stroke-dasharray="2 2" class="x2" d="M7 1a6 6 0 1 0 .1 0"/>' + win,
    panel: '<rect x="3" y="1" width="10" height="14"/><path d="M5 4h6M5 8h6M5 12h6"/>',
    kxs: '<rect x="1" y="2" width="14" height="12"/><path d="M4 5v3M4 6l2-1M9 8l4 4M13 8l-3 4"/>',
    help: '<circle class="b" cx="8" cy="8" r="7"/><path d="M6 6c0-3 5-3 4 0c0 1-2 1-2 4M8 11v2"/>',
    snapdots: '<path stroke-dasharray="2 2" d="M0 8h10"/>' + dot(13, 8, 'fr') + dot(2, 8, 'fs'),
    snapline: '<path d="M2 14L14 2"/>' + dot(2, 14, 'fs') + dot(8, 8, 'fr') + dot(14, 2, 'fs'),
    snapend: '<rect x="0" y="0" width="16" height="16" fill="#5f7d9b" stroke="none"/><path d="M3 13L13 3"/>' + dot(3, 13, 'fr') + dot(13, 3, 'fr'),
    snapmid: '<rect x="0" y="0" width="16" height="16" fill="#5f7d9b" stroke="none"/><path d="M3 13L13 3"/>' + dot(8, 8, 'fr'),
    snapnear: '<path d="M2 12L12 3M8 8l5 5"/>' + dot(6, 9, 'fr') + dot(12, 9, 'fr'),
    snapcen: '<circle cx="8" cy="8" r="7" fill="#5f84a8"/>' + dot(8, 8, 'fr'),
    snapbox: '<rect x="1" y="1" width="14" height="14"/>' + dot(8, 8, 'fr'),
    snapperp: '<path d="M8 1v12M1 13h14"/>' + dot(8, 13, 'fr'),
    snappar: '<path d="M3 14L11 3M6 14L14 3"/>',
    snaptan: '<circle cx="8" cy="9" r="6"/><path d="M1 6l8-6"/>' + dot(5, 4, 'fr'),
    snapquad: '<circle cx="8" cy="8" r="6"/>' + dot(8, 2, 'fr') + dot(8, 14, 'fr') + dot(2, 8, 'fr') + dot(14, 8, 'fr'),
    snapins: '<rect x="2" y="1" width="8" height="8"/><circle cx="10" cy="10" r="5"/>' + dot(8, 8, 'fr'),
    snapnode: dot(8, 8, 'fr'),
    snapint: '<rect x="0" y="0" width="16" height="16" fill="#5f7d9b" stroke="none"/><path d="M3 3l10 10M13 3L3 13"/>' + dot(8, 8, 'fr'),
    snapext: '<rect x="0" y="0" width="16" height="16" fill="#5f7d9b" stroke="none"/><path d="M8 1v14M2 14L14 2"/>' + dot(8, 8, 'fr'),
    snapapp: '<path d="M2 2l4 6" stroke-dasharray="3 2"/><path d="M1 14h14"/>' + dot(9, 13, 'fr'),
    snapoff: dot(6, 8, 'fw') + '<path class="r x2" d="M9 11l5 4M14 11l-5 4"/>',
    dimz: '<path d="M2 15V5l3-3h10M2 5h9"/>' + dot(3, 5, 'fr') + '<path class="x2" d="M8 8h5l-5 6h5"/>',
    hatch: '<rect class="r" x="1" y="1" width="14" height="14"/><path class="r" d="M1 6l5-5M1 10l9-9M1 14L14 1M5 15L15 5M9 15l6-6"/>',
    negz: '<path d="M15 1v14l-3-3V3M0 8h3M12 5L8 3" /><path d="M4 7h4l-4 6h4" class="x2"/>' + dot(1, 4, 'fr'),
    dimh: '<path d="M2 2v13M14 2v13M2 5h12"/>' + dot(2, 14, 'fr') + dot(14, 14, 'fr'),
    lasche: '<path d="M1 3l4-2l10 5v4l-3 1L1 7zM1 3l10 5l4-2"/>' + dot(13, 13, 'fy'),
    sheet: '<path class="b" d="M1 10l4-5h8l2-4v7l-4 5H1zM5 5v5M10 5v5"/><path d="M1 14h10"/>',
    loft: '<path d="M5 2l3-1l3 1v3l3 5l-6 5l-6-5l3-5zM5 5l3 2l3-2M8 7v8"/>',
    cubetri: cubePath + '<path class="b" d="M8 3v5l-5 4M8 8l5 4"/>',
    bend: sheetBend,
    lip: '<path class="b" d="M2 12h9a3 3 0 0 0 0-6H6"/><path d="M1 9h9a1 1 0 0 0 0-1H4V4h8a5 5 0 0 1 0 10H1z"/>',
    liparrow: '<path d="M1 10l3-7h8l3 7M4 10l2-4h4l2 4"/><path class="fg" d="M8 7l4 4H9v5H7v-5H4z"/>',
    hem: '<path class="b" d="M1 14h4V6a3 3 0 0 1 6 0v8h4"/><path d="M2 11V6a6 6 0 0 1 12 0v5"/>',
    jog: '<path d="M6 3h4l2 5h3M6 7h2l2 5h5"/><path class="fg" d="M0 3l5 1l2 5l-3-1l-4-3z"/>',
    corner: '<path d="M9 1h5v14H1v-4h8z"/><path class="r" d="M9 10l5 5"/>',
    relief: '<path d="M1 1c3 5 11 5 14 0M1 15c3-5 11-5 14 0"/><path class="b" d="M1 6h14M1 10h14"/>',
    notch: '<path class="b" d="M13 5H6v6h9"/><path d="M1 1h12v4H5v6h10v4H1z"/>',
    bolts: '<path stroke-dasharray="2 2" class="b" d="M3 1v14"/><path d="M9 1l5 5M14 1L9 6"/>' + bolt,
    bendx: '<path d="M10 1h4v6a8 8 0 0 1-8 8H1v-4h4a5 5 0 0 0 5-5z"/>',
    lockpie: '<circle cx="8" cy="8" r="7"/><path class="b" d="M8 1v7l-5 5M8 8l5 5"/>' + lock16,
    sphereshade: '<circle class="fs" cx="7" cy="9" r="6"/><circle cx="5" cy="7" r="2" fill="#ddd" stroke="none"/>' + dot(14, 2, 'fy'),
    cubex: cubePath + '<path class="b" d="M8 3v5l-5 4"/><path class="r x2" d="M10 10l5 5M15 10l-5 5"/>',
    recycle: '<path d="M5 1h5l3 6M5 1L1 12h6"/><circle cx="11" cy="11" r="4" stroke="#18b034" stroke-width="2"/>',
    flatten: '<path class="b" d="M1 9c3 0 2-4 7-4s4 4 7 4"/><path d="M1 5c3 0 2-4 7-4s4 4 7 4M1 14c3 0 2-4 7-4s4 4 7 4"/>',
    box3d: '<path d="M1 15v-4h4V4l4-3h6v7l-4 4H8v3zM5 4h6v7M11 4l4-3"/>',
    plate: '<path d="M5 3h10v3l-4 7H1v-3zM1 10h10l4-7M11 10v3"/>',
    cubedot: '<path class="b" d="M1 4l3-3h8v7l-3 3H1zM1 4h8v7M9 4l3-3"/>' + dot(14, 14, 'fg'),
    unfold: '<path d="M2 3h6v8h6v3" stroke="#eee" stroke-width="3"/>',
    lockbend: '<path class="fo" d="M1 3h6v5H1z"/><path d="M2 3V1h4v2M14 5c0 6-4 9-8 9M10 5c0 4-2 6-6 6"/><path class="r" d="M9 1v3M12 1v3M15 1v3M3 12v4"/>',
    grid4: '<rect x="1" y="1" width="5" height="5"/><rect x="1" y="9" width="5" height="6"/><rect x="8" y="9" width="6" height="6"/>' + dot(12, 3, 'fo'),
    pie: '<circle cx="8" cy="8" r="7"/><path class="b" d="M8 1v7l-5 5"/><path class="fr" d="M8 8h4v4H8z"/><path class="fy" d="M12 12h4v4h-4z"/><path class="fg" d="M12 8h4v4h-4z"/>',
    layers: stackPath,
    layerswin: stackPath + win,
    layersarrow: stackPath + '<path class="b x2" d="M9 11h4v4"/>',
    layersbulb: stackPath + lamp('fy'),
    layersgrey: stackPath + lamp('fs'),
    layer1: '<path d="M4 2h10l-4 7H0zM11 12v-2a1 1 0 0 1 3 0v2M10 12h5v4h-5z"/>',
    layerlock: '<path d="M4 2h10l-4 7H0z"/>' + lock16,
    layer2: '<path class="b" d="M4 2h10l-4 7H0z"/>',

    project: '<path d="M3 2l3-1h7l-3 3H3zM10 4l3-3"/><path class="b" d="M3 5v6M12 4v5M1 12c4 0 6 4 10 2l4-4c-4 0-6-2-10 0z"/>',
    ellipse: '<ellipse cx="8" cy="8" rx="8" ry="5" transform="rotate(-45 8 8)"/><path d="M3 13L13 3"/>',
    boundary: '<rect x="1" y="3" width="12" height="12"/><circle class="b" cx="9" cy="7" r="6"/>',
    align: '<path class="b" d="M3 1h5v13H3z"/><path d="M10 8h4v6h-4zM1 15h14"/>',
    hull: '<circle cx="4" cy="10" r="3"/><path d="M6 4h5v7H6M13 1c2 0 1 3 1 5l1 2l-1 2c0 3 0 5-3 5"/>',
    scale: '<rect class="b" x="1" y="2" width="14" height="13"/><rect x="1" y="8" width="7" height="7"/><path d="M9 8l5-5M11 3h3v3"/>',
    wirecube: '<path d="M2 5l7-4l5 4v6l-6 4l-6-4z"/><path class="b" d="M2 5l5 3l7-3M7 8l1 7M2 11l5-3l7 3"/>',
    ccoin: '<path d="M3 4v8M5 14h10"/><circle class="r" cx="3" cy="2.5" r="2"/><circle class="r" cx="3" cy="13" r="2"/>',
    cperp: '<path d="M2 14L14 1M8 8l5 6"/><path class="r" d="M6 6v5h4"/>',
    cconc: '<circle class="r" cx="8" cy="8" r="7.5"/><circle cx="8" cy="8" r="4"/>',
    clock: '<path class="x2" d="M4 8V5a4 4 0 0 1 8 0v3"/><rect class="fo" x="2" y="7" width="12" height="9"/>',
    cpar: '<path class="r x2" d="M1 12L8 2"/><path d="M7 14l7-10"/>',
    cangle: '<path class="r x2" d="M1 8l7-6"/><path d="M5 4l9 10"/>',
    cequal: '<path class="r" d="M2 6h12"/><path d="M2 10h12"/>',
    cvert: '<path class="r x2" d="M7 2v12"/><path d="M10 2v12"/>',
    ctan: '<path class="r x2" d="M1 15L14 1M1 8l7 0"/><path d="M5 15c0-5 4-8 9-8"/>',
    ctanc: '<circle class="r x2" cx="7" cy="6" r="5"/><path class="r x2" d="M5 16L15 4"/>',
    csym: '<path class="r" d="M2 2v12l5-6zM8 1v14"/><path d="M14 2v12l-5-6z"/>',
    chor: '<path class="r" d="M5 7h7" opacity=".7"/><path class="r" d="M5 10h7" opacity=".4"/>',
    geobulb: '<path class="x2" d="M3 1v14M1 1h4M1 15h4"/><path d="M5 2h9v11H5" opacity=".6"/><path class="r x2" d="M7 6h5"/>' + lamp('fy'),
    geogrey: '<path class="x2" d="M3 1v14M1 1h4M1 15h4"/><path d="M5 2h9v11H5" opacity=".6"/><path class="r x2" d="M7 6h5"/>' + lamp('fs'),
    dimbulb: '<path d="M1 1v5M15 1v5M1 3h14"/>' + lamp('fy'),
    dimgrey: '<path d="M1 1v5M15 1v5M1 3h14"/>' + lamp('fs'),

    treea: '<path d="M1 1h4v3H1zM3 4v9h4M7 9h3l1 1h4v5H7zM9 12h4"/>',
    treeb: '<path d="M1 1h4v3H1zM3 4v9h4M7 9h3l1 1h4v5H7z"/><rect x="8" y="11" width="7" height="4" fill="#7a1a20" stroke="none"/>',
    sortaz: '<rect x="2" y="1" width="3" height="3"/><rect x="2" y="12" width="3" height="3"/><path d="M3.5 4v8" stroke-dasharray="2 1"/><path d="M9 6l2.5-5L14 6M10 4h3M9 10h4l-4 5h4"/>',
    binoc: '<path d="M3 1h3v4l1 2v8H1V7l2-2zM13 1h-3v4L9 7v8h6V7l-2-2zM7 9h2M1 11h6M9 11h6M3 4h3M10 4h3"/>',
    part: '<path d="M3 1l4-1v9l7 3v3l-3 1l-8-4zM3 1l2 1v8l7 4"/>',
    folder: '<path d="M1 13V3h4l1 2h6v3M1 13l4-6h11l-4 6z"/>',
    flange: '<path d="M1 3h9l5 4v6H6L1 8zM1 3l5 5h9M6 8v5"/>',
    bendg: '<path d="M11 0h4v7c0 5-3 8-8 8H1v-4h5c3 0 5-2 5-5z"/>',
    relg: '<path d="M1 1h14v13H1v-4h10V5H1z"/>',
    jung: '<path d="M10 0h5v10h-5zM1 10h10v5H1z"/>',
    padlock: '<path class="x2" d="M5 8V5a3 3 0 0 1 6 0v3"/><rect class="fw" x="2" y="7" width="12" height="8"/>',
    up: '<path d="M5 9l3-3l3 3" stroke="#444"/>',
    down: '<path d="M5 7l3 3l3-3" stroke="#444"/>',
    close: '<path d="M4 4l8 8M12 4l-8 8"/>',
    add: '<path d="M8 3v10M3 8h10"/>',
    first: '<path class="fw" d="M12 3v10L7 8z"/><path d="M5 3v10"/>',
    prev: '<path class="fw" d="M10 3v10L6 8z"/>',
    next: '<path class="fw" d="M6 3v10l5-5z"/>',
    lastp: '<path class="fw" d="M4 3v10l5-5z"/><path d="M11 3v10"/>',
    rows: '<path d="M2 2h12v12H2zM2 6h12M2 10h12"/>',
    filter: '<path d="M2 3h10l-4 5v5l-2-1V8z"/>' + dot(13, 13, 'fy'),
    eye: '<path class="fw" d="M2 8c3-5 9-5 12 0c-3 5-9 5-12 0z"/><circle class="fb" cx="8" cy="8" r="2"/>',

    line: '<path d="M2 14L14 2"/>' + dot(2, 14) + dot(14, 2),
    pline: '<path d="M2 14V7a6 5 0 0 1 12 0"/>' + dot(2, 14) + dot(2, 7) + dot(14, 7),
    rect: '<rect x="3" y="3" width="11" height="10"/>' + dot(3, 13) + dot(14, 3),
    arc: '<path d="M4 12A6 6 0 1 1 14 8"/>' + dot(9, 14) + dot(14, 8, 'fw') + dot(2, 5),
    circle: '<circle cx="8" cy="8" r="7"/><path class="b" d="M8 8h7"/>' + sq(8, 8),
    ellarc: '<path d="M13 2C6 1 1 7 3 12c2 3 6 2 9 0M4 12l9-9"/>' + dot(3, 13) + dot(13, 3),
    spline: '<path d="M1 14c10 0 2-12 7-12s6 2 6 6"/>' + dot(1, 14) + dot(6, 3) + dot(14, 8),
    point: sq(8, 8),
    reghatch: '<rect x="1" y="5" width="11" height="10"/><circle cx="10" cy="6" r="6"/><path class="fb" d="M4 6h8v6H6z" opacity=".7"/>',
    regfill: '<rect x="1" y="5" width="11" height="10"/><circle cx="10" cy="6" r="6"/><path class="fb" d="M4 5h8v7c-5 1-8-2-8-7z"/>',
    wipe: '<path d="M5 9C-1 7 1 0 6 1c4 0 3 4 4 5h6l-3 6l-4 3l-4-2z"/>',
    zz: '<path d="M1 2h14L6 12h9v3H1L10 5H2z"/>',
    cloud: '<path d="M5 4c0-4 6-4 6 0c5-1 6 5 2 6c1 5-4 6-5 3c-2 3-7 1-5-3c-4-1-3-7 2-6z"/>',
    table: '<path d="M1 1h14v14H1zM1 5h14M1 8h14M1 12h14M6 4v11M11 4v11"/><path class="fs" d="M1 1h14v3H1z"/>',
    texta: '<path class="x2" d="M2 15L8 1l6 14M4 10h8" stroke="#eee"/>',
    textb: '<path d="M1 11L5 0l4 11M2 7h6" stroke="#eee"/><path d="M9 11h6M1 13h14M1 15h14"/>',
    secplane: '<path d="M1 7l4-3h10v4l-4 4H1zM1 7h10v5"/><path class="fb" d="M5 9l6-8v8l-6 7z"/>',
    secmove: '<path class="b" d="M1 6l4-5v8l-4 5z"/><path d="M10 2h3v4M7 8h6v5H7z"/><circle cx="13" cy="13" r="2.5"/>',
    secside: '<path d="M1 7l4-3h8M1 7h9v5H1z"/><path class="fb" d="M9 7l6-6v9l-6 6z"/>',
    viewbox: '<rect x="6" y="1" width="9" height="9"/><path d="M8 4h4v4H8z"/><path class="fw" d="M1 10l3-1l3 1v4l-3 2l-3-2z"/>',
    cubeshade: '<rect x="0.5" y="0.5" width="15" height="15"/><path class="fs" d="M4 5l4-2l4 2v6l-4 2l-4-2z"/><path class="fw" d="M4 5l4 2v6l-4-2z"/>',

    move: arrows16,
    copy: '<path d="M1 1h5v5H1zM9 2h3v4"/><path class="b" d="M7 8h6v5H7zM10 11h5v5h-5z"/>',
    offset: '<path class="b" d="M3 15V6a5 5 0 0 1 11 0M3 15h4"/><path d="M7 12V7c0-3 4-2 4 0"/>',
    copybolt: '<path d="M1 1h5v5H1zM9 2h3v4"/><path class="b" d="M8 8h5v5H8zM10 11h5v4h-5z"/><path class="fy" d="M5 8l-4 5h2l-1 3l5-5H4l2-3z"/>',
    movebolt: arrows16 + bolt,
    rotate: '<path class="b" d="M5 3a6 6 0 1 0 6 0"/><path class="fb" d="M9 0v6L5 3z"/>' + dot(8, 9, 'fw'),
    rot3d: '<path class="b" d="M14 6c2 3-2 5-6 5s-8-2-6-5s8-3 10-1"/><path d="M8 0v16"/>',
    mirror: '<path d="M6 3v11H1zM8 0v16"/><path class="b" d="M10 3v11h5z"/>',
    mirror3d: '<path d="M7 2L1 12h5zM9 4l6 8"/><path class="fb" d="M8 2l7 10l-4 3l-5-7z"/><path d="M15 2L7 13"/>',
    array: '<path class="b" d="M1 1h5v5H1zM9 1h5v5H9zM1 9h5v6H1zM9 9h5v6H9z"/>',
    trim: '<path class="b" d="M1 4h8v8H1z"/><path d="M9 4h6v8H9M10 1v14"/>',
    extend: '<path class="b x2" d="M0 9h9"/><path d="M9 15L15 1"/>',
    break: '<path d="M4 5H1v10h14V5h-3"/><path class="b x2" d="M4 1v5M11 1v5"/>',
    join: '<path d="M4 5H1v9h14V5h-3"/><path class="fb" d="M2 3h3V1l3 3l-3 3V5H2zM15 3h-3V1L9 4l3 3V5h3z"/>',
    lengthen: '<path d="M0 8h9"/><path class="b" d="M9 8h5"/>' + dot(14, 8),
    stretch: '<path d="M1 1h7v14H1z"/><path class="b" d="M8 1h2l5 14H8"/>',
    chamfer: '<path d="M1 2h10M1 2v6"/><path class="b" d="M1 15v-6l8-7h7"/>',
    fillet: '<path d="M1 15V1h5M1 15h14"/><path class="b" d="M5 1c6 0 10 5 10 14"/>',
    chainb: '<path class="b" d="M1 14L15 1"/><path d="M2 10h4v4H2zM6 6h4v4H6zM10 3h4v4h-4z"/>',
    chain: '<path d="M1 12h4v3H1zM4 8h4v4H4zM8 6h4v4H8zM11 2h4v4h-4z"/>',
    hatchedit: '<path d="M1 1h12v12H1zM1 6l5-5M1 10l9-9M1 13L13 1M5 13l8-8"/>' + pencil,
    pledit: '<path class="b" d="M8 1C3 1 2 4 2 8s1 6 5 6"/>' + pencil,
    spedit: '<path d="M2 14c12 0 6-6 4-12c4-1 7 2 7 6"/>' + dot(4, 2) + pencil,

    Lucs: '<path d="M4 3v25h24"/><path class="fw" d="M4 0l3 6H1zM32 28l-6 3v-6z"/><path fill="#b8bbbe" stroke="none" d="M15 6l5-5h12v11l-5 6V6z"/><path class="fb" d="M15 6h12v12H15z"/>',
    Lpoly: '<path d="M3 28V14a12 12 0 0 1 26 0"/>' + sq(3, 29) + sq(3, 14) + sq(29, 14),
    Lcircle: '<circle cx="16" cy="16" r="15"/><path class="b" d="M16 16h12"/>' + sq(15, 16) + sq(30, 16),
    Larc: '<path d="M4 8C8-2 28-2 28 14M4 8c-4 9 2 20 13 21"/>' + dot(4, 8) + dot(28, 16, 'fw') + sq(18, 29),
    Lrect: '<rect x="5" y="6" width="21" height="20"/>' + sq(5, 27) + sq(26, 6),
    Lmove: '<path class="b x2" d="M16 8v20M6 18h20"/><path class="fb" d="M16 4l4 6h-8zM16 32l4-6h-8zM3 18l6-4v8zM29 18l-6-4v8z"/>',
    Lcopy: '<path d="M1 1h11v11H1zM18 4h5v6"/><path class="fw" d="M20 8h6l-3 4z"/><path class="b" d="M16 17h11v10H16zM21 21h11v10H21z"/>',
    Lrotate: '<path class="b" stroke-width="1.5" d="M22 5A13 13 0 1 1 9 6"/><path class="fb" d="M20 0v11l-8-5z"/><path d="M14 16h4v3h-4z"/>',
    Lmirror: '<path d="M12 7v19H2zM16 1v31"/><path class="b" d="M20 7v19h10z"/>',
    Larray: '<path class="b" d="M1 1h12v7H1zM18 1h12v7H18zM1 12h12v7H1zM18 12h12v7H18zM1 23h12v7H1zM18 23h12v7H18z"/>',
    Lorder: '<path d="M20 5V1h12v17h-4M11 12V7h15v15h-5"/><rect class="b" x="0" y="13" width="20" height="18"/>',
    Loffset: '<path class="b" stroke-width="2" d="M6 31V12a10 10 0 0 1 20-1M6 31h10"/><path d="M12 28V14c0-6 8-6 9-1M12 28h4"/>',
    Lstretch: '<path d="M16 1H1v30h15"/><path class="b" d="M16 1h4l11 30H16"/><path stroke-dasharray="2 1" d="M16 1v30"/>',
    Ltrim: '<path class="b" stroke-width="1.5" d="M20 8H0v16h20"/><path d="M21 8h11v16H21M20 3v27"/>',
    Lextend: '<path class="b x2" d="M0 18h16"/><path stroke-dasharray="2 1" d="M17 18h7"/><path d="M22 31L32 1"/>',
    Lchamfer: '<path stroke-dasharray="2 1" d="M1 1h17M1 1v17"/><path class="b" d="M1 32V19L20 1h12"/>',
    Lbreak: '<path d="M8 8H1v19h30V8h-7"/><path class="b" d="M5 8h4V4v10M27 8h-4V4v10"/>',
    Llinear: '<path d="M2 2v12M18 2v12M3 8h14M5 2h10M5 14h10M10 0v18"/><path class="fw" d="M2 8l4-2v4zM18 8l-4-2v4z"/>' + lock32,
    Laligned: '<path d="M5 25L25 4M1 24l6 7M20 0l8 8"/><path class="fw" d="M3 28l2-7l4 4zM28 2l-3 7l-4-4z"/>' + lock32,
    Lradius: '<path d="M14 30A15 15 0 1 1 31 17M14 16L24 6"/><path class="fw" d="M26 4l-2 7l-5-5z"/>' + lock32,
    Langle: '<path d="M6 25C7 14 12 7 26 5M0 31h14M30 0v14"/><path class="fw" d="M6 28l-3-6h6zM29 5l-6 3V2z"/>' + lock32,
    Lconvert: '<path d="M1 2v11M31 2v11M3 8h26"/><path class="fw" d="M1 8l6-3v6zM31 8l-6-3v6z"/><path class="x2" d="M14 17c-6 3-6 9-2 13"/><path class="r x2" d="M19 15c5 4 4 10-1 14"/>',
    Ldelete: '<path d="M7 6l19 20M26 6L7 26" stroke="#f4623a" stroke-width="4"/>',

    Sbrick: '<path d="M13 2l11 5v12l-11 6L2 19V7zM2 7l11 6l11-6M13 13v12"/><path d="M9 3v4c2 2 6 2 8 0V3c-2-2-6-2-8 0c2 2 6 2 8 0" fill="#1f222b"/>',
    Sballoon: '<path d="M9 20C-5 9 4 1 13 1s18 8 4 19zM9 20C5 12 6 4 13 1c7 3 8 11 4 19M12 20C10 12 10 5 13 1c3 4 3 11 1 19M11 22h4v3h-4z"/>',
    Stree: '<path d="M1 1h12v6H1zM4 4h6M7 7v15h5M7 14h5M12 11h13v5H12zM12 20h13v5H12z"/>',
    Stable: '<path d="M1 2h24v22H1zM1 6h24M1 12h24M1 18h24M8 6v18M16 6v18"/>'
};

function draw(name) {
    const kind = name[0];
    const size = kind === 'L' ? 32 : kind === 'S' ? 26 : 16;
    const cls = kind === 'L' ? 'ico large' : kind === 'S' ? 'ico side' : 'ico';
    return `<svg class="${cls}" viewBox="0 0 ${size} ${size}" aria-hidden="true">${icons[name]}</svg>`;
}

document.querySelectorAll('[data-icon]').forEach(el => {
    el.innerHTML = draw(el.dataset.icon);
});

// "|" separator, ":" grip, leading "*" pressed, trailing "." flyout
document.querySelectorAll('[data-icons]').forEach(bar => {
    bar.dataset.icons.split(' ').forEach(item => {
        const el = document.createElement(/[|:]/.test(item) ? 'span' : 'button');
        if (item === '|') {
            el.className = 'sep';
        } else if (item === ':') {
            el.className = 'dots';
        } else {
            const name = item.replace(/[*.]/g, '');
            el.className = 'tool' + (item[0] === '*' ? ' active' : '') + (item.endsWith('.') ? ' flyout' : '');
            el.setAttribute('aria-label', name);
            el.innerHTML = draw(name);
        }
        bar.appendChild(el);
    });
});
```
